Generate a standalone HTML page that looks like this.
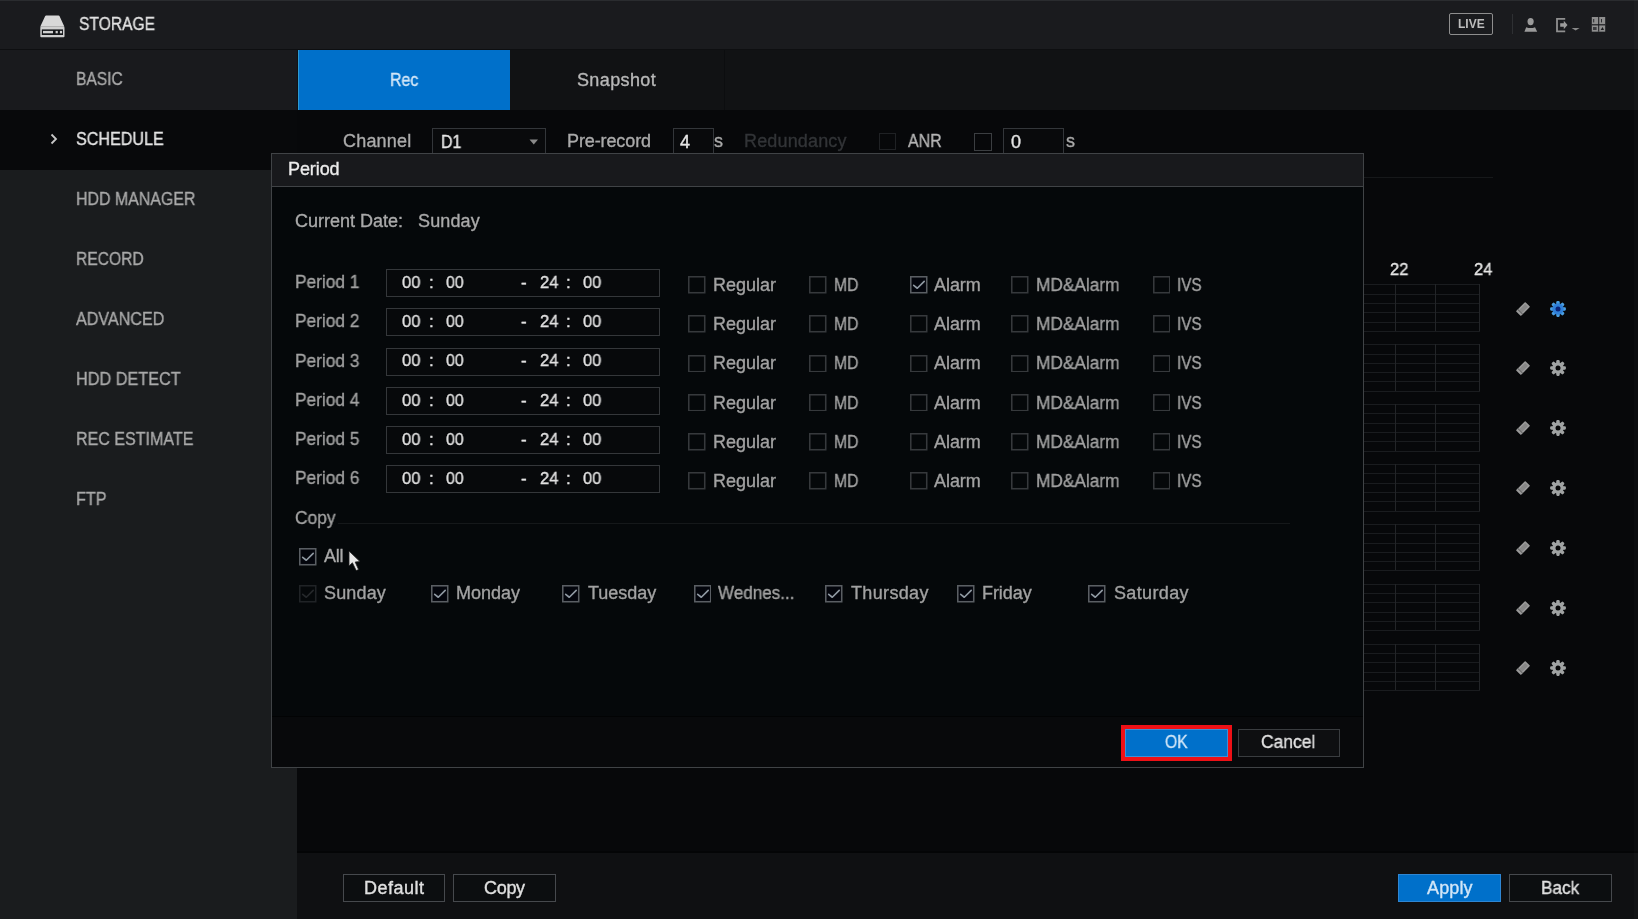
<!DOCTYPE html>
<html><head><meta charset="utf-8"><style>
html,body{margin:0;padding:0;width:1638px;height:919px;overflow:hidden;background:#0a0b0d;}
body{position:relative;font-family:"Liberation Sans",sans-serif;}
.t{position:absolute;white-space:nowrap;line-height:1;transform-origin:0 0;will-change:transform;-webkit-text-stroke:0.35px currentColor;}
.r{position:absolute;}
</style></head><body>
<div class="r" style="left:0px;top:0px;width:1638px;height:919px;background:#07080a;"></div>
<div class="r" style="left:0px;top:0px;width:1638px;height:50px;background:#1a1b1e;"></div>
<div class="r" style="left:0px;top:0px;width:1638px;height:1px;background:#2a2c2f;"></div>
<div class="r" style="left:0px;top:49px;width:1638px;height:1px;background:#0e0f11;"></div>
<div class="r" style="left:0px;top:50px;width:297px;height:60px;background:#191a1d;"></div>
<div class="r" style="left:297px;top:50px;width:1341px;height:60px;background:#111214;"></div>
<div class="r" style="left:0px;top:110px;width:297px;height:809px;background:#1a1c1e;"></div>
<div class="r" style="left:0px;top:110px;width:297px;height:60px;background:#08090b;"></div>
<div class="r" style="left:297px;top:853px;width:1341px;height:66px;background:#0f1012;"></div>
<div class="r" style="left:297px;top:851px;width:1341px;height:2px;background:#040506;"></div>
<div class="r" style="left:1634px;top:0px;width:4px;height:919px;background:rgba(255,255,255,0.02);"></div>
<div class="r" style="left:298px;top:50px;width:212px;height:60px;background:#0070ca;"></div>
<div class="r" style="left:298px;top:50px;width:1px;height:60px;background:#2d9ad0;"></div>
<div class="r" style="left:724px;top:50px;width:1px;height:60px;background:#0c0d0f;"></div>
<svg class="r" style="left:38px;top:13px" width="30" height="26" viewBox="0 0 30 26">
<path d="M8.2 2.4 L20.5 2.4 Q21.3 2.4 21.6 3.2 L26.4 13.8 L2.2 13.8 L7.1 3.2 Q7.4 2.4 8.2 2.4Z" fill="#d8d8d8"/>
<rect x="2.3" y="13.8" width="24.2" height="10.4" rx="1" fill="#cfcfcf"/>
<rect x="3.8" y="16.4" width="21.2" height="5.6" fill="#15171a"/>
<rect x="5" y="17.9" width="10" height="2.4" fill="#d0d0d0"/>
<rect x="17.6" y="17.9" width="2.2" height="2.4" fill="#d0d0d0"/>
<rect x="21.9" y="17.9" width="2.2" height="2.4" fill="#d0d0d0"/>
</svg>
<div class="t" style="left:78.80px;top:14.95px;font-size:18px;color:#e2e2e2;transform:scaleX(0.8661);">STORAGE</div>
<div class="r" style="left:1449px;top:13px;width:44px;height:22px;border:1.5px solid #8e8e8e;box-sizing:border-box;border-radius:2px;"></div>
<div class="t" style="left:1457.80px;top:17.70px;font-size:12px;color:#bdbdbd;letter-spacing:0.025px;font-weight:bold;-webkit-text-stroke:0;">LIVE</div>
<div class="r" style="left:1512px;top:14px;width:1px;height:20px;background:#2e3033;"></div>
<svg class="r" style="left:1520px;top:14px" width="22" height="22" viewBox="0 0 22 22">
<ellipse cx="10.6" cy="7.6" rx="3.1" ry="3.7" fill="#9a9a9a"/>
<path d="M4.4 17.8 L6.2 13.2 Q10.6 15 15 13.2 L17.2 17.8Z" fill="#9a9a9a"/>
</svg>
<svg class="r" style="left:1552px;top:14px" width="30" height="22" viewBox="0 0 30 22">
<path d="M13.2 4.8 L5 4.8 L5 17.4 L13.2 17.4" fill="none" stroke="#909090" stroke-width="1.8"/>
<path d="M8.2 9.2 L11.8 9.2 L11.8 6.8 L15.5 11 L11.8 15.2 L11.8 12.8 L8.2 12.8Z" fill="#9c9c9c"/>
<path d="M19.6 14 L27.6 14 L23.6 16.6Z" fill="#8a8a8a"/>
</svg>
<svg class="r" style="left:1590px;top:15px" width="18" height="20" viewBox="0 0 18 20">
<rect x="1.8" y="2" width="13.4" height="14.7" fill="#8e8e8e"/>
<rect x="1.8" y="9.2" width="13.4" height="1.2" fill="#1a1b1e"/>
<rect x="8.2" y="2" width="1" height="14.7" fill="#1a1b1e"/>
<rect x="3.2" y="4" width="1" height="3.4" fill="#2a2b2e"/>
<rect x="11" y="4" width="1" height="3.4" fill="#2a2b2e"/>
<rect x="3" y="12" width="3.6" height="3" fill="#3a3b3e"/>
<path d="M10.6 15 L12.6 12 L14 15Z" fill="#1a1b1e"/>
</svg>
<svg class="r" style="left:49px;top:132px" width="10" height="14" viewBox="0 0 10 14">
<path d="M2.5 2.5 L7 7 L2.5 11.5" fill="none" stroke="#c8c8c8" stroke-width="1.8"/></svg>
<div class="t" style="left:75.80px;top:70.35px;font-size:18px;color:#a9a9a9;transform:scaleX(0.8648);">BASIC</div>
<div class="t" style="left:75.80px;top:130.30px;font-size:18px;color:#e4e4e4;transform:scaleX(0.8949);">SCHEDULE</div>
<div class="t" style="left:75.80px;top:190.25px;font-size:18px;color:#a9a9a9;transform:scaleX(0.8844);">HDD MANAGER</div>
<div class="t" style="left:75.80px;top:250.20px;font-size:18px;color:#a9a9a9;transform:scaleX(0.8679);">RECORD</div>
<div class="t" style="left:75.80px;top:310.15px;font-size:18px;color:#a9a9a9;transform:scaleX(0.8942);">ADVANCED</div>
<div class="t" style="left:75.80px;top:370.10px;font-size:18px;color:#a9a9a9;transform:scaleX(0.9026);">HDD DETECT</div>
<div class="t" style="left:75.80px;top:430.05px;font-size:18px;color:#a9a9a9;transform:scaleX(0.8912);">REC ESTIMATE</div>
<div class="t" style="left:75.80px;top:490.00px;font-size:18px;color:#a9a9a9;transform:scaleX(0.8971);">FTP</div>
<div class="t" style="left:389.80px;top:70.85px;font-size:18px;color:#d2e6f7;transform:scaleX(0.8844);">Rec</div>
<div class="t" style="left:577.30px;top:70.85px;font-size:18px;color:#b8b8b8;letter-spacing:0.368px;">Snapshot</div>
<div class="t" style="left:342.80px;top:131.75px;font-size:18px;color:#aaaaaa;letter-spacing:0.200px;">Channel</div>
<div class="r" style="left:432px;top:128px;width:114px;height:32px;background:#090a0c;border:1px solid #33363a;box-sizing:border-box;"></div>
<div class="t" style="left:441.00px;top:132.55px;font-size:18px;color:#e6e6e6;transform:scaleX(0.8826);">D1</div>
<svg class="r" style="left:528px;top:138px" width="12" height="8"><path d="M1.5 1.5 L10 1.5 L5.75 6.5Z" fill="#8a8a8a"/></svg>
<div class="t" style="left:567.00px;top:131.75px;font-size:18px;color:#aaaaaa;letter-spacing:-0.111px;">Pre-record</div>
<div class="r" style="left:673px;top:128px;width:41px;height:32px;background:#090a0c;border:1px solid #33363a;box-sizing:border-box;"></div>
<div class="t" style="left:680.00px;top:132.55px;font-size:18px;color:#e6e6e6;">4</div>
<div class="t" style="left:713.50px;top:131.75px;font-size:18px;color:#aaaaaa;">s</div>
<div class="t" style="left:743.50px;top:131.75px;font-size:18px;color:#323437;letter-spacing:0.153px;">Redundancy</div>
<div class="r" style="left:879px;top:133px;width:17px;height:17px;border:1.5px solid #1f2124;box-sizing:border-box;"></div>
<div class="t" style="left:907.60px;top:131.75px;font-size:18px;color:#b4b4b4;transform:scaleX(0.8868);">ANR</div>
<div class="r" style="left:974px;top:133px;width:18px;height:18px;border:1.5px solid #3b3e41;box-sizing:border-box;"></div>
<div class="r" style="left:1003px;top:128px;width:61px;height:32px;background:#090a0c;border:1px solid #33363a;box-sizing:border-box;"></div>
<div class="t" style="left:1011.00px;top:132.55px;font-size:18px;color:#e6e6e6;">0</div>
<div class="t" style="left:1065.50px;top:131.75px;font-size:18px;color:#aaaaaa;">s</div>
<div class="r" style="left:1364px;top:177px;width:129px;height:1px;background:#16181a;"></div>
<div class="t" style="left:1389.90px;top:260.71px;font-size:17px;color:#e6e6e6;transform:scaleX(0.9695);">22</div>
<div class="t" style="left:1474.30px;top:260.71px;font-size:17px;color:#e6e6e6;transform:scaleX(0.9695);">24</div>
<div class="r" style="left:1363px;top:284.3px;width:117px;height:1px;background:#1a1c1f"></div><div class="r" style="left:1363px;top:293.6px;width:117px;height:1px;background:#1a1c1f"></div><div class="r" style="left:1363px;top:302.9px;width:117px;height:1px;background:#1a1c1f"></div><div class="r" style="left:1363px;top:312.2px;width:117px;height:1px;background:#1a1c1f"></div><div class="r" style="left:1363px;top:321.5px;width:117px;height:1px;background:#1a1c1f"></div><div class="r" style="left:1363px;top:330.8px;width:117px;height:1px;background:#1a1c1f"></div><div class="r" style="left:1395px;top:284.3px;width:1.3px;height:46.5px;background:#232528"></div><div class="r" style="left:1435px;top:284.3px;width:1.3px;height:46.5px;background:#232528"></div><div class="r" style="left:1479px;top:284.3px;width:1.3px;height:46.5px;background:#232528"></div>
<svg class="r" style="left:1513px;top:298.50px" width="20" height="20" viewBox="0 0 20 20">
<g transform="rotate(-45 10 10)"><rect x="3.4" y="6.5" width="13.2" height="7" rx="0.8" fill="#9a9a9a"/><rect x="6" y="8.1" width="9" height="3.8" fill="#878787"/><rect x="5.6" y="6.5" width="0.9" height="7" fill="#606060"/></g></svg>
<svg class="r" style="left:1547.6px;top:298.50px" width="20" height="20" viewBox="0 0 20 20"><rect x="8.3" y="2.1" width="3.4" height="4.5" rx="1.1" fill="#4a9ee0" transform="rotate(0 10 10)"/><rect x="8.3" y="2.1" width="3.4" height="4.5" rx="1.1" fill="#4a9ee0" transform="rotate(45 10 10)"/><rect x="8.3" y="2.1" width="3.4" height="4.5" rx="1.1" fill="#4a9ee0" transform="rotate(90 10 10)"/><rect x="8.3" y="2.1" width="3.4" height="4.5" rx="1.1" fill="#4a9ee0" transform="rotate(135 10 10)"/><rect x="8.3" y="2.1" width="3.4" height="4.5" rx="1.1" fill="#4a9ee0" transform="rotate(180 10 10)"/><rect x="8.3" y="2.1" width="3.4" height="4.5" rx="1.1" fill="#4a9ee0" transform="rotate(225 10 10)"/><rect x="8.3" y="2.1" width="3.4" height="4.5" rx="1.1" fill="#4a9ee0" transform="rotate(270 10 10)"/><rect x="8.3" y="2.1" width="3.4" height="4.5" rx="1.1" fill="#4a9ee0" transform="rotate(315 10 10)"/><circle cx="10" cy="10" r="5.7" fill="#2f7fd8"/><circle cx="10" cy="10" r="2.5" fill="#0a2478"/></svg>
<div class="r" style="left:1363px;top:344.2px;width:117px;height:1px;background:#1a1c1f"></div><div class="r" style="left:1363px;top:353.5px;width:117px;height:1px;background:#1a1c1f"></div><div class="r" style="left:1363px;top:362.8px;width:117px;height:1px;background:#1a1c1f"></div><div class="r" style="left:1363px;top:372.1px;width:117px;height:1px;background:#1a1c1f"></div><div class="r" style="left:1363px;top:381.4px;width:117px;height:1px;background:#1a1c1f"></div><div class="r" style="left:1363px;top:390.7px;width:117px;height:1px;background:#1a1c1f"></div><div class="r" style="left:1395px;top:344.2px;width:1.3px;height:46.5px;background:#232528"></div><div class="r" style="left:1435px;top:344.2px;width:1.3px;height:46.5px;background:#232528"></div><div class="r" style="left:1479px;top:344.2px;width:1.3px;height:46.5px;background:#232528"></div>
<svg class="r" style="left:1513px;top:358.40px" width="20" height="20" viewBox="0 0 20 20">
<g transform="rotate(-45 10 10)"><rect x="3.4" y="6.5" width="13.2" height="7" rx="0.8" fill="#9a9a9a"/><rect x="6" y="8.1" width="9" height="3.8" fill="#878787"/><rect x="5.6" y="6.5" width="0.9" height="7" fill="#606060"/></g></svg>
<svg class="r" style="left:1547.6px;top:358.40px" width="20" height="20" viewBox="0 0 20 20"><rect x="8.3" y="2.1" width="3.4" height="4.5" rx="1.1" fill="#a0a3a3" transform="rotate(0 10 10)"/><rect x="8.3" y="2.1" width="3.4" height="4.5" rx="1.1" fill="#a0a3a3" transform="rotate(45 10 10)"/><rect x="8.3" y="2.1" width="3.4" height="4.5" rx="1.1" fill="#a0a3a3" transform="rotate(90 10 10)"/><rect x="8.3" y="2.1" width="3.4" height="4.5" rx="1.1" fill="#a0a3a3" transform="rotate(135 10 10)"/><rect x="8.3" y="2.1" width="3.4" height="4.5" rx="1.1" fill="#a0a3a3" transform="rotate(180 10 10)"/><rect x="8.3" y="2.1" width="3.4" height="4.5" rx="1.1" fill="#a0a3a3" transform="rotate(225 10 10)"/><rect x="8.3" y="2.1" width="3.4" height="4.5" rx="1.1" fill="#a0a3a3" transform="rotate(270 10 10)"/><rect x="8.3" y="2.1" width="3.4" height="4.5" rx="1.1" fill="#a0a3a3" transform="rotate(315 10 10)"/><circle cx="10" cy="10" r="5.7" fill="#a0a3a3"/><circle cx="10" cy="10" r="2.5" fill="#050607"/></svg>
<div class="r" style="left:1363px;top:404.1px;width:117px;height:1px;background:#1a1c1f"></div><div class="r" style="left:1363px;top:413.4px;width:117px;height:1px;background:#1a1c1f"></div><div class="r" style="left:1363px;top:422.7px;width:117px;height:1px;background:#1a1c1f"></div><div class="r" style="left:1363px;top:432.0px;width:117px;height:1px;background:#1a1c1f"></div><div class="r" style="left:1363px;top:441.3px;width:117px;height:1px;background:#1a1c1f"></div><div class="r" style="left:1363px;top:450.6px;width:117px;height:1px;background:#1a1c1f"></div><div class="r" style="left:1395px;top:404.1px;width:1.3px;height:46.5px;background:#232528"></div><div class="r" style="left:1435px;top:404.1px;width:1.3px;height:46.5px;background:#232528"></div><div class="r" style="left:1479px;top:404.1px;width:1.3px;height:46.5px;background:#232528"></div>
<svg class="r" style="left:1513px;top:418.30px" width="20" height="20" viewBox="0 0 20 20">
<g transform="rotate(-45 10 10)"><rect x="3.4" y="6.5" width="13.2" height="7" rx="0.8" fill="#9a9a9a"/><rect x="6" y="8.1" width="9" height="3.8" fill="#878787"/><rect x="5.6" y="6.5" width="0.9" height="7" fill="#606060"/></g></svg>
<svg class="r" style="left:1547.6px;top:418.30px" width="20" height="20" viewBox="0 0 20 20"><rect x="8.3" y="2.1" width="3.4" height="4.5" rx="1.1" fill="#a0a3a3" transform="rotate(0 10 10)"/><rect x="8.3" y="2.1" width="3.4" height="4.5" rx="1.1" fill="#a0a3a3" transform="rotate(45 10 10)"/><rect x="8.3" y="2.1" width="3.4" height="4.5" rx="1.1" fill="#a0a3a3" transform="rotate(90 10 10)"/><rect x="8.3" y="2.1" width="3.4" height="4.5" rx="1.1" fill="#a0a3a3" transform="rotate(135 10 10)"/><rect x="8.3" y="2.1" width="3.4" height="4.5" rx="1.1" fill="#a0a3a3" transform="rotate(180 10 10)"/><rect x="8.3" y="2.1" width="3.4" height="4.5" rx="1.1" fill="#a0a3a3" transform="rotate(225 10 10)"/><rect x="8.3" y="2.1" width="3.4" height="4.5" rx="1.1" fill="#a0a3a3" transform="rotate(270 10 10)"/><rect x="8.3" y="2.1" width="3.4" height="4.5" rx="1.1" fill="#a0a3a3" transform="rotate(315 10 10)"/><circle cx="10" cy="10" r="5.7" fill="#a0a3a3"/><circle cx="10" cy="10" r="2.5" fill="#050607"/></svg>
<div class="r" style="left:1363px;top:464.0px;width:117px;height:1px;background:#1a1c1f"></div><div class="r" style="left:1363px;top:473.3px;width:117px;height:1px;background:#1a1c1f"></div><div class="r" style="left:1363px;top:482.6px;width:117px;height:1px;background:#1a1c1f"></div><div class="r" style="left:1363px;top:491.9px;width:117px;height:1px;background:#1a1c1f"></div><div class="r" style="left:1363px;top:501.2px;width:117px;height:1px;background:#1a1c1f"></div><div class="r" style="left:1363px;top:510.5px;width:117px;height:1px;background:#1a1c1f"></div><div class="r" style="left:1395px;top:464.0px;width:1.3px;height:46.5px;background:#232528"></div><div class="r" style="left:1435px;top:464.0px;width:1.3px;height:46.5px;background:#232528"></div><div class="r" style="left:1479px;top:464.0px;width:1.3px;height:46.5px;background:#232528"></div>
<svg class="r" style="left:1513px;top:478.20px" width="20" height="20" viewBox="0 0 20 20">
<g transform="rotate(-45 10 10)"><rect x="3.4" y="6.5" width="13.2" height="7" rx="0.8" fill="#9a9a9a"/><rect x="6" y="8.1" width="9" height="3.8" fill="#878787"/><rect x="5.6" y="6.5" width="0.9" height="7" fill="#606060"/></g></svg>
<svg class="r" style="left:1547.6px;top:478.20px" width="20" height="20" viewBox="0 0 20 20"><rect x="8.3" y="2.1" width="3.4" height="4.5" rx="1.1" fill="#a0a3a3" transform="rotate(0 10 10)"/><rect x="8.3" y="2.1" width="3.4" height="4.5" rx="1.1" fill="#a0a3a3" transform="rotate(45 10 10)"/><rect x="8.3" y="2.1" width="3.4" height="4.5" rx="1.1" fill="#a0a3a3" transform="rotate(90 10 10)"/><rect x="8.3" y="2.1" width="3.4" height="4.5" rx="1.1" fill="#a0a3a3" transform="rotate(135 10 10)"/><rect x="8.3" y="2.1" width="3.4" height="4.5" rx="1.1" fill="#a0a3a3" transform="rotate(180 10 10)"/><rect x="8.3" y="2.1" width="3.4" height="4.5" rx="1.1" fill="#a0a3a3" transform="rotate(225 10 10)"/><rect x="8.3" y="2.1" width="3.4" height="4.5" rx="1.1" fill="#a0a3a3" transform="rotate(270 10 10)"/><rect x="8.3" y="2.1" width="3.4" height="4.5" rx="1.1" fill="#a0a3a3" transform="rotate(315 10 10)"/><circle cx="10" cy="10" r="5.7" fill="#a0a3a3"/><circle cx="10" cy="10" r="2.5" fill="#050607"/></svg>
<div class="r" style="left:1363px;top:523.9px;width:117px;height:1px;background:#1a1c1f"></div><div class="r" style="left:1363px;top:533.2px;width:117px;height:1px;background:#1a1c1f"></div><div class="r" style="left:1363px;top:542.5px;width:117px;height:1px;background:#1a1c1f"></div><div class="r" style="left:1363px;top:551.8px;width:117px;height:1px;background:#1a1c1f"></div><div class="r" style="left:1363px;top:561.1px;width:117px;height:1px;background:#1a1c1f"></div><div class="r" style="left:1363px;top:570.4px;width:117px;height:1px;background:#1a1c1f"></div><div class="r" style="left:1395px;top:523.9px;width:1.3px;height:46.5px;background:#232528"></div><div class="r" style="left:1435px;top:523.9px;width:1.3px;height:46.5px;background:#232528"></div><div class="r" style="left:1479px;top:523.9px;width:1.3px;height:46.5px;background:#232528"></div>
<svg class="r" style="left:1513px;top:538.10px" width="20" height="20" viewBox="0 0 20 20">
<g transform="rotate(-45 10 10)"><rect x="3.4" y="6.5" width="13.2" height="7" rx="0.8" fill="#9a9a9a"/><rect x="6" y="8.1" width="9" height="3.8" fill="#878787"/><rect x="5.6" y="6.5" width="0.9" height="7" fill="#606060"/></g></svg>
<svg class="r" style="left:1547.6px;top:538.10px" width="20" height="20" viewBox="0 0 20 20"><rect x="8.3" y="2.1" width="3.4" height="4.5" rx="1.1" fill="#a0a3a3" transform="rotate(0 10 10)"/><rect x="8.3" y="2.1" width="3.4" height="4.5" rx="1.1" fill="#a0a3a3" transform="rotate(45 10 10)"/><rect x="8.3" y="2.1" width="3.4" height="4.5" rx="1.1" fill="#a0a3a3" transform="rotate(90 10 10)"/><rect x="8.3" y="2.1" width="3.4" height="4.5" rx="1.1" fill="#a0a3a3" transform="rotate(135 10 10)"/><rect x="8.3" y="2.1" width="3.4" height="4.5" rx="1.1" fill="#a0a3a3" transform="rotate(180 10 10)"/><rect x="8.3" y="2.1" width="3.4" height="4.5" rx="1.1" fill="#a0a3a3" transform="rotate(225 10 10)"/><rect x="8.3" y="2.1" width="3.4" height="4.5" rx="1.1" fill="#a0a3a3" transform="rotate(270 10 10)"/><rect x="8.3" y="2.1" width="3.4" height="4.5" rx="1.1" fill="#a0a3a3" transform="rotate(315 10 10)"/><circle cx="10" cy="10" r="5.7" fill="#a0a3a3"/><circle cx="10" cy="10" r="2.5" fill="#050607"/></svg>
<div class="r" style="left:1363px;top:583.8px;width:117px;height:1px;background:#1a1c1f"></div><div class="r" style="left:1363px;top:593.1px;width:117px;height:1px;background:#1a1c1f"></div><div class="r" style="left:1363px;top:602.4px;width:117px;height:1px;background:#1a1c1f"></div><div class="r" style="left:1363px;top:611.7px;width:117px;height:1px;background:#1a1c1f"></div><div class="r" style="left:1363px;top:621.0px;width:117px;height:1px;background:#1a1c1f"></div><div class="r" style="left:1363px;top:630.3px;width:117px;height:1px;background:#1a1c1f"></div><div class="r" style="left:1395px;top:583.8px;width:1.3px;height:46.5px;background:#232528"></div><div class="r" style="left:1435px;top:583.8px;width:1.3px;height:46.5px;background:#232528"></div><div class="r" style="left:1479px;top:583.8px;width:1.3px;height:46.5px;background:#232528"></div>
<svg class="r" style="left:1513px;top:598.00px" width="20" height="20" viewBox="0 0 20 20">
<g transform="rotate(-45 10 10)"><rect x="3.4" y="6.5" width="13.2" height="7" rx="0.8" fill="#9a9a9a"/><rect x="6" y="8.1" width="9" height="3.8" fill="#878787"/><rect x="5.6" y="6.5" width="0.9" height="7" fill="#606060"/></g></svg>
<svg class="r" style="left:1547.6px;top:598.00px" width="20" height="20" viewBox="0 0 20 20"><rect x="8.3" y="2.1" width="3.4" height="4.5" rx="1.1" fill="#a0a3a3" transform="rotate(0 10 10)"/><rect x="8.3" y="2.1" width="3.4" height="4.5" rx="1.1" fill="#a0a3a3" transform="rotate(45 10 10)"/><rect x="8.3" y="2.1" width="3.4" height="4.5" rx="1.1" fill="#a0a3a3" transform="rotate(90 10 10)"/><rect x="8.3" y="2.1" width="3.4" height="4.5" rx="1.1" fill="#a0a3a3" transform="rotate(135 10 10)"/><rect x="8.3" y="2.1" width="3.4" height="4.5" rx="1.1" fill="#a0a3a3" transform="rotate(180 10 10)"/><rect x="8.3" y="2.1" width="3.4" height="4.5" rx="1.1" fill="#a0a3a3" transform="rotate(225 10 10)"/><rect x="8.3" y="2.1" width="3.4" height="4.5" rx="1.1" fill="#a0a3a3" transform="rotate(270 10 10)"/><rect x="8.3" y="2.1" width="3.4" height="4.5" rx="1.1" fill="#a0a3a3" transform="rotate(315 10 10)"/><circle cx="10" cy="10" r="5.7" fill="#a0a3a3"/><circle cx="10" cy="10" r="2.5" fill="#050607"/></svg>
<div class="r" style="left:1363px;top:643.7px;width:117px;height:1px;background:#1a1c1f"></div><div class="r" style="left:1363px;top:653.0px;width:117px;height:1px;background:#1a1c1f"></div><div class="r" style="left:1363px;top:662.3px;width:117px;height:1px;background:#1a1c1f"></div><div class="r" style="left:1363px;top:671.6px;width:117px;height:1px;background:#1a1c1f"></div><div class="r" style="left:1363px;top:680.9px;width:117px;height:1px;background:#1a1c1f"></div><div class="r" style="left:1363px;top:690.2px;width:117px;height:1px;background:#1a1c1f"></div><div class="r" style="left:1395px;top:643.7px;width:1.3px;height:46.5px;background:#232528"></div><div class="r" style="left:1435px;top:643.7px;width:1.3px;height:46.5px;background:#232528"></div><div class="r" style="left:1479px;top:643.7px;width:1.3px;height:46.5px;background:#232528"></div>
<svg class="r" style="left:1513px;top:657.90px" width="20" height="20" viewBox="0 0 20 20">
<g transform="rotate(-45 10 10)"><rect x="3.4" y="6.5" width="13.2" height="7" rx="0.8" fill="#9a9a9a"/><rect x="6" y="8.1" width="9" height="3.8" fill="#878787"/><rect x="5.6" y="6.5" width="0.9" height="7" fill="#606060"/></g></svg>
<svg class="r" style="left:1547.6px;top:657.90px" width="20" height="20" viewBox="0 0 20 20"><rect x="8.3" y="2.1" width="3.4" height="4.5" rx="1.1" fill="#a0a3a3" transform="rotate(0 10 10)"/><rect x="8.3" y="2.1" width="3.4" height="4.5" rx="1.1" fill="#a0a3a3" transform="rotate(45 10 10)"/><rect x="8.3" y="2.1" width="3.4" height="4.5" rx="1.1" fill="#a0a3a3" transform="rotate(90 10 10)"/><rect x="8.3" y="2.1" width="3.4" height="4.5" rx="1.1" fill="#a0a3a3" transform="rotate(135 10 10)"/><rect x="8.3" y="2.1" width="3.4" height="4.5" rx="1.1" fill="#a0a3a3" transform="rotate(180 10 10)"/><rect x="8.3" y="2.1" width="3.4" height="4.5" rx="1.1" fill="#a0a3a3" transform="rotate(225 10 10)"/><rect x="8.3" y="2.1" width="3.4" height="4.5" rx="1.1" fill="#a0a3a3" transform="rotate(270 10 10)"/><rect x="8.3" y="2.1" width="3.4" height="4.5" rx="1.1" fill="#a0a3a3" transform="rotate(315 10 10)"/><circle cx="10" cy="10" r="5.7" fill="#a0a3a3"/><circle cx="10" cy="10" r="2.5" fill="#050607"/></svg>
<div class="r" style="left:271px;top:153px;width:1093px;height:615px;background:#05080a;border:1px solid #404346;box-sizing:border-box;"></div>
<div class="r" style="left:272px;top:717px;width:1091px;height:50px;background:#08090b;"></div>
<div class="r" style="left:272px;top:154px;width:1091px;height:32px;background:#18191c;"></div>
<div class="r" style="left:272px;top:186px;width:1091px;height:1px;background:#404346;"></div>
<div class="t" style="left:288.30px;top:160.35px;font-size:18px;color:#ececec;letter-spacing:-0.080px;">Period</div>
<div class="t" style="left:294.90px;top:211.65px;font-size:18px;color:#aaaaaa;">Current Date:</div>
<div class="t" style="left:418.20px;top:211.65px;font-size:18px;color:#aaaaaa;letter-spacing:0.120px;">Sunday</div>
<div class="t" style="left:295.00px;top:273.05px;font-size:18px;color:#a2a2a2;transform:scaleX(0.9612);">Period 1</div>
<div class="r" style="left:386px;top:269.0px;width:274px;height:28.0px;background:#07090b;border:1px solid #34373a;box-sizing:border-box;"></div>
<div class="t" style="left:402.00px;top:273.91px;font-size:17px;color:#e2e2e2;transform:scaleX(0.9748);">00</div>
<div class="t" style="left:429.00px;top:273.91px;font-size:17px;color:#e2e2e2;">:</div>
<div class="t" style="left:446.00px;top:273.91px;font-size:17px;color:#e2e2e2;transform:scaleX(0.9325);">00</div>
<div class="t" style="left:520.50px;top:273.91px;font-size:17px;color:#e2e2e2;">-</div>
<div class="t" style="left:540.00px;top:273.91px;font-size:17px;color:#e2e2e2;transform:scaleX(0.9748);">24</div>
<div class="t" style="left:566.00px;top:273.91px;font-size:17px;color:#e2e2e2;">:</div>
<div class="t" style="left:582.80px;top:273.91px;font-size:17px;color:#e2e2e2;transform:scaleX(0.9642);">00</div>
<svg class="r" style="left:688.2px;top:276.0px" width="17.5" height="17.5" viewBox="0 0 18 18"><rect x="0.8" y="0.8" width="16.4" height="16.4" fill="transparent" stroke="#36393c" stroke-width="1.6"/></svg>
<div class="t" style="left:712.80px;top:275.75px;font-size:18px;color:#a2a2a2;letter-spacing:-0.017px;">Regular</div>
<svg class="r" style="left:809.3px;top:276.0px" width="17.5" height="17.5" viewBox="0 0 18 18"><rect x="0.8" y="0.8" width="16.4" height="16.4" fill="transparent" stroke="#36393c" stroke-width="1.6"/></svg>
<div class="t" style="left:834.30px;top:275.75px;font-size:18px;color:#a2a2a2;transform:scaleX(0.8714);">MD</div>
<svg class="r" style="left:910.0px;top:276.0px" width="17.5" height="17.5" viewBox="0 0 18 18"><rect x="0.8" y="0.8" width="16.4" height="16.4" fill="#03050c" stroke="#5a5e63" stroke-width="1.6"/><path d="M3.8 9.6 L7.5 12.6 L14.6 5.6" fill="none" stroke="#8f99a3" stroke-width="1.7" stroke-linecap="round" stroke-linejoin="round"/></svg>
<div class="t" style="left:934.00px;top:275.75px;font-size:18px;color:#a2a2a2;letter-spacing:-0.050px;">Alarm</div>
<svg class="r" style="left:1011.0px;top:276.0px" width="17.5" height="17.5" viewBox="0 0 18 18"><rect x="0.8" y="0.8" width="16.4" height="16.4" fill="transparent" stroke="#36393c" stroke-width="1.6"/></svg>
<div class="t" style="left:1035.90px;top:275.75px;font-size:18px;color:#a2a2a2;transform:scaleX(0.9598);">MD&amp;Alarm</div>
<svg class="r" style="left:1152.7px;top:276.0px" width="17.5" height="17.5" viewBox="0 0 18 18"><rect x="0.8" y="0.8" width="16.4" height="16.4" fill="transparent" stroke="#36393c" stroke-width="1.6"/></svg>
<div class="t" style="left:1177.30px;top:275.75px;font-size:18px;color:#a2a2a2;transform:scaleX(0.8483);">IVS</div>
<div class="t" style="left:295.00px;top:312.30px;font-size:18px;color:#a2a2a2;transform:scaleX(0.9612);">Period 2</div>
<div class="r" style="left:386px;top:308.25px;width:274px;height:28.0px;background:#07090b;border:1px solid #34373a;box-sizing:border-box;"></div>
<div class="t" style="left:402.00px;top:313.16px;font-size:17px;color:#e2e2e2;transform:scaleX(0.9748);">00</div>
<div class="t" style="left:429.00px;top:313.16px;font-size:17px;color:#e2e2e2;">:</div>
<div class="t" style="left:446.00px;top:313.16px;font-size:17px;color:#e2e2e2;transform:scaleX(0.9325);">00</div>
<div class="t" style="left:520.50px;top:313.16px;font-size:17px;color:#e2e2e2;">-</div>
<div class="t" style="left:540.00px;top:313.16px;font-size:17px;color:#e2e2e2;transform:scaleX(0.9748);">24</div>
<div class="t" style="left:566.00px;top:313.16px;font-size:17px;color:#e2e2e2;">:</div>
<div class="t" style="left:582.80px;top:313.16px;font-size:17px;color:#e2e2e2;transform:scaleX(0.9642);">00</div>
<svg class="r" style="left:688.2px;top:315.2px" width="17.5" height="17.5" viewBox="0 0 18 18"><rect x="0.8" y="0.8" width="16.4" height="16.4" fill="transparent" stroke="#36393c" stroke-width="1.6"/></svg>
<div class="t" style="left:712.80px;top:315.00px;font-size:18px;color:#a2a2a2;letter-spacing:-0.017px;">Regular</div>
<svg class="r" style="left:809.3px;top:315.2px" width="17.5" height="17.5" viewBox="0 0 18 18"><rect x="0.8" y="0.8" width="16.4" height="16.4" fill="transparent" stroke="#36393c" stroke-width="1.6"/></svg>
<div class="t" style="left:834.30px;top:315.00px;font-size:18px;color:#a2a2a2;transform:scaleX(0.8714);">MD</div>
<svg class="r" style="left:910.0px;top:315.2px" width="17.5" height="17.5" viewBox="0 0 18 18"><rect x="0.8" y="0.8" width="16.4" height="16.4" fill="transparent" stroke="#36393c" stroke-width="1.6"/></svg>
<div class="t" style="left:934.00px;top:315.00px;font-size:18px;color:#a2a2a2;letter-spacing:-0.050px;">Alarm</div>
<svg class="r" style="left:1011.0px;top:315.2px" width="17.5" height="17.5" viewBox="0 0 18 18"><rect x="0.8" y="0.8" width="16.4" height="16.4" fill="transparent" stroke="#36393c" stroke-width="1.6"/></svg>
<div class="t" style="left:1035.90px;top:315.00px;font-size:18px;color:#a2a2a2;transform:scaleX(0.9598);">MD&amp;Alarm</div>
<svg class="r" style="left:1152.7px;top:315.2px" width="17.5" height="17.5" viewBox="0 0 18 18"><rect x="0.8" y="0.8" width="16.4" height="16.4" fill="transparent" stroke="#36393c" stroke-width="1.6"/></svg>
<div class="t" style="left:1177.30px;top:315.00px;font-size:18px;color:#a2a2a2;transform:scaleX(0.8483);">IVS</div>
<div class="t" style="left:295.00px;top:351.55px;font-size:18px;color:#a2a2a2;transform:scaleX(0.9612);">Period 3</div>
<div class="r" style="left:386px;top:347.5px;width:274px;height:28.0px;background:#07090b;border:1px solid #34373a;box-sizing:border-box;"></div>
<div class="t" style="left:402.00px;top:352.41px;font-size:17px;color:#e2e2e2;transform:scaleX(0.9748);">00</div>
<div class="t" style="left:429.00px;top:352.41px;font-size:17px;color:#e2e2e2;">:</div>
<div class="t" style="left:446.00px;top:352.41px;font-size:17px;color:#e2e2e2;transform:scaleX(0.9325);">00</div>
<div class="t" style="left:520.50px;top:352.41px;font-size:17px;color:#e2e2e2;">-</div>
<div class="t" style="left:540.00px;top:352.41px;font-size:17px;color:#e2e2e2;transform:scaleX(0.9748);">24</div>
<div class="t" style="left:566.00px;top:352.41px;font-size:17px;color:#e2e2e2;">:</div>
<div class="t" style="left:582.80px;top:352.41px;font-size:17px;color:#e2e2e2;transform:scaleX(0.9642);">00</div>
<svg class="r" style="left:688.2px;top:354.5px" width="17.5" height="17.5" viewBox="0 0 18 18"><rect x="0.8" y="0.8" width="16.4" height="16.4" fill="transparent" stroke="#36393c" stroke-width="1.6"/></svg>
<div class="t" style="left:712.80px;top:354.25px;font-size:18px;color:#a2a2a2;letter-spacing:-0.017px;">Regular</div>
<svg class="r" style="left:809.3px;top:354.5px" width="17.5" height="17.5" viewBox="0 0 18 18"><rect x="0.8" y="0.8" width="16.4" height="16.4" fill="transparent" stroke="#36393c" stroke-width="1.6"/></svg>
<div class="t" style="left:834.30px;top:354.25px;font-size:18px;color:#a2a2a2;transform:scaleX(0.8714);">MD</div>
<svg class="r" style="left:910.0px;top:354.5px" width="17.5" height="17.5" viewBox="0 0 18 18"><rect x="0.8" y="0.8" width="16.4" height="16.4" fill="transparent" stroke="#36393c" stroke-width="1.6"/></svg>
<div class="t" style="left:934.00px;top:354.25px;font-size:18px;color:#a2a2a2;letter-spacing:-0.050px;">Alarm</div>
<svg class="r" style="left:1011.0px;top:354.5px" width="17.5" height="17.5" viewBox="0 0 18 18"><rect x="0.8" y="0.8" width="16.4" height="16.4" fill="transparent" stroke="#36393c" stroke-width="1.6"/></svg>
<div class="t" style="left:1035.90px;top:354.25px;font-size:18px;color:#a2a2a2;transform:scaleX(0.9598);">MD&amp;Alarm</div>
<svg class="r" style="left:1152.7px;top:354.5px" width="17.5" height="17.5" viewBox="0 0 18 18"><rect x="0.8" y="0.8" width="16.4" height="16.4" fill="transparent" stroke="#36393c" stroke-width="1.6"/></svg>
<div class="t" style="left:1177.30px;top:354.25px;font-size:18px;color:#a2a2a2;transform:scaleX(0.8483);">IVS</div>
<div class="t" style="left:295.00px;top:390.80px;font-size:18px;color:#a2a2a2;transform:scaleX(0.9612);">Period 4</div>
<div class="r" style="left:386px;top:386.75px;width:274px;height:28.0px;background:#07090b;border:1px solid #34373a;box-sizing:border-box;"></div>
<div class="t" style="left:402.00px;top:391.66px;font-size:17px;color:#e2e2e2;transform:scaleX(0.9748);">00</div>
<div class="t" style="left:429.00px;top:391.66px;font-size:17px;color:#e2e2e2;">:</div>
<div class="t" style="left:446.00px;top:391.66px;font-size:17px;color:#e2e2e2;transform:scaleX(0.9325);">00</div>
<div class="t" style="left:520.50px;top:391.66px;font-size:17px;color:#e2e2e2;">-</div>
<div class="t" style="left:540.00px;top:391.66px;font-size:17px;color:#e2e2e2;transform:scaleX(0.9748);">24</div>
<div class="t" style="left:566.00px;top:391.66px;font-size:17px;color:#e2e2e2;">:</div>
<div class="t" style="left:582.80px;top:391.66px;font-size:17px;color:#e2e2e2;transform:scaleX(0.9642);">00</div>
<svg class="r" style="left:688.2px;top:393.8px" width="17.5" height="17.5" viewBox="0 0 18 18"><rect x="0.8" y="0.8" width="16.4" height="16.4" fill="transparent" stroke="#36393c" stroke-width="1.6"/></svg>
<div class="t" style="left:712.80px;top:393.50px;font-size:18px;color:#a2a2a2;letter-spacing:-0.017px;">Regular</div>
<svg class="r" style="left:809.3px;top:393.8px" width="17.5" height="17.5" viewBox="0 0 18 18"><rect x="0.8" y="0.8" width="16.4" height="16.4" fill="transparent" stroke="#36393c" stroke-width="1.6"/></svg>
<div class="t" style="left:834.30px;top:393.50px;font-size:18px;color:#a2a2a2;transform:scaleX(0.8714);">MD</div>
<svg class="r" style="left:910.0px;top:393.8px" width="17.5" height="17.5" viewBox="0 0 18 18"><rect x="0.8" y="0.8" width="16.4" height="16.4" fill="transparent" stroke="#36393c" stroke-width="1.6"/></svg>
<div class="t" style="left:934.00px;top:393.50px;font-size:18px;color:#a2a2a2;letter-spacing:-0.050px;">Alarm</div>
<svg class="r" style="left:1011.0px;top:393.8px" width="17.5" height="17.5" viewBox="0 0 18 18"><rect x="0.8" y="0.8" width="16.4" height="16.4" fill="transparent" stroke="#36393c" stroke-width="1.6"/></svg>
<div class="t" style="left:1035.90px;top:393.50px;font-size:18px;color:#a2a2a2;transform:scaleX(0.9598);">MD&amp;Alarm</div>
<svg class="r" style="left:1152.7px;top:393.8px" width="17.5" height="17.5" viewBox="0 0 18 18"><rect x="0.8" y="0.8" width="16.4" height="16.4" fill="transparent" stroke="#36393c" stroke-width="1.6"/></svg>
<div class="t" style="left:1177.30px;top:393.50px;font-size:18px;color:#a2a2a2;transform:scaleX(0.8483);">IVS</div>
<div class="t" style="left:295.00px;top:430.05px;font-size:18px;color:#a2a2a2;transform:scaleX(0.9612);">Period 5</div>
<div class="r" style="left:386px;top:426.0px;width:274px;height:28.0px;background:#07090b;border:1px solid #34373a;box-sizing:border-box;"></div>
<div class="t" style="left:402.00px;top:430.91px;font-size:17px;color:#e2e2e2;transform:scaleX(0.9748);">00</div>
<div class="t" style="left:429.00px;top:430.91px;font-size:17px;color:#e2e2e2;">:</div>
<div class="t" style="left:446.00px;top:430.91px;font-size:17px;color:#e2e2e2;transform:scaleX(0.9325);">00</div>
<div class="t" style="left:520.50px;top:430.91px;font-size:17px;color:#e2e2e2;">-</div>
<div class="t" style="left:540.00px;top:430.91px;font-size:17px;color:#e2e2e2;transform:scaleX(0.9748);">24</div>
<div class="t" style="left:566.00px;top:430.91px;font-size:17px;color:#e2e2e2;">:</div>
<div class="t" style="left:582.80px;top:430.91px;font-size:17px;color:#e2e2e2;transform:scaleX(0.9642);">00</div>
<svg class="r" style="left:688.2px;top:433.0px" width="17.5" height="17.5" viewBox="0 0 18 18"><rect x="0.8" y="0.8" width="16.4" height="16.4" fill="transparent" stroke="#36393c" stroke-width="1.6"/></svg>
<div class="t" style="left:712.80px;top:432.75px;font-size:18px;color:#a2a2a2;letter-spacing:-0.017px;">Regular</div>
<svg class="r" style="left:809.3px;top:433.0px" width="17.5" height="17.5" viewBox="0 0 18 18"><rect x="0.8" y="0.8" width="16.4" height="16.4" fill="transparent" stroke="#36393c" stroke-width="1.6"/></svg>
<div class="t" style="left:834.30px;top:432.75px;font-size:18px;color:#a2a2a2;transform:scaleX(0.8714);">MD</div>
<svg class="r" style="left:910.0px;top:433.0px" width="17.5" height="17.5" viewBox="0 0 18 18"><rect x="0.8" y="0.8" width="16.4" height="16.4" fill="transparent" stroke="#36393c" stroke-width="1.6"/></svg>
<div class="t" style="left:934.00px;top:432.75px;font-size:18px;color:#a2a2a2;letter-spacing:-0.050px;">Alarm</div>
<svg class="r" style="left:1011.0px;top:433.0px" width="17.5" height="17.5" viewBox="0 0 18 18"><rect x="0.8" y="0.8" width="16.4" height="16.4" fill="transparent" stroke="#36393c" stroke-width="1.6"/></svg>
<div class="t" style="left:1035.90px;top:432.75px;font-size:18px;color:#a2a2a2;transform:scaleX(0.9598);">MD&amp;Alarm</div>
<svg class="r" style="left:1152.7px;top:433.0px" width="17.5" height="17.5" viewBox="0 0 18 18"><rect x="0.8" y="0.8" width="16.4" height="16.4" fill="transparent" stroke="#36393c" stroke-width="1.6"/></svg>
<div class="t" style="left:1177.30px;top:432.75px;font-size:18px;color:#a2a2a2;transform:scaleX(0.8483);">IVS</div>
<div class="t" style="left:295.00px;top:469.30px;font-size:18px;color:#a2a2a2;transform:scaleX(0.9612);">Period 6</div>
<div class="r" style="left:386px;top:465.25px;width:274px;height:28.0px;background:#07090b;border:1px solid #34373a;box-sizing:border-box;"></div>
<div class="t" style="left:402.00px;top:470.16px;font-size:17px;color:#e2e2e2;transform:scaleX(0.9748);">00</div>
<div class="t" style="left:429.00px;top:470.16px;font-size:17px;color:#e2e2e2;">:</div>
<div class="t" style="left:446.00px;top:470.16px;font-size:17px;color:#e2e2e2;transform:scaleX(0.9325);">00</div>
<div class="t" style="left:520.50px;top:470.16px;font-size:17px;color:#e2e2e2;">-</div>
<div class="t" style="left:540.00px;top:470.16px;font-size:17px;color:#e2e2e2;transform:scaleX(0.9748);">24</div>
<div class="t" style="left:566.00px;top:470.16px;font-size:17px;color:#e2e2e2;">:</div>
<div class="t" style="left:582.80px;top:470.16px;font-size:17px;color:#e2e2e2;transform:scaleX(0.9642);">00</div>
<svg class="r" style="left:688.2px;top:472.2px" width="17.5" height="17.5" viewBox="0 0 18 18"><rect x="0.8" y="0.8" width="16.4" height="16.4" fill="transparent" stroke="#36393c" stroke-width="1.6"/></svg>
<div class="t" style="left:712.80px;top:472.00px;font-size:18px;color:#a2a2a2;letter-spacing:-0.017px;">Regular</div>
<svg class="r" style="left:809.3px;top:472.2px" width="17.5" height="17.5" viewBox="0 0 18 18"><rect x="0.8" y="0.8" width="16.4" height="16.4" fill="transparent" stroke="#36393c" stroke-width="1.6"/></svg>
<div class="t" style="left:834.30px;top:472.00px;font-size:18px;color:#a2a2a2;transform:scaleX(0.8714);">MD</div>
<svg class="r" style="left:910.0px;top:472.2px" width="17.5" height="17.5" viewBox="0 0 18 18"><rect x="0.8" y="0.8" width="16.4" height="16.4" fill="transparent" stroke="#36393c" stroke-width="1.6"/></svg>
<div class="t" style="left:934.00px;top:472.00px;font-size:18px;color:#a2a2a2;letter-spacing:-0.050px;">Alarm</div>
<svg class="r" style="left:1011.0px;top:472.2px" width="17.5" height="17.5" viewBox="0 0 18 18"><rect x="0.8" y="0.8" width="16.4" height="16.4" fill="transparent" stroke="#36393c" stroke-width="1.6"/></svg>
<div class="t" style="left:1035.90px;top:472.00px;font-size:18px;color:#a2a2a2;transform:scaleX(0.9598);">MD&amp;Alarm</div>
<svg class="r" style="left:1152.7px;top:472.2px" width="17.5" height="17.5" viewBox="0 0 18 18"><rect x="0.8" y="0.8" width="16.4" height="16.4" fill="transparent" stroke="#36393c" stroke-width="1.6"/></svg>
<div class="t" style="left:1177.30px;top:472.00px;font-size:18px;color:#a2a2a2;transform:scaleX(0.8483);">IVS</div>
<div class="t" style="left:294.80px;top:509.15px;font-size:18px;color:#a2a2a2;transform:scaleX(0.9643);">Copy</div>
<div class="r" style="left:338px;top:523px;width:952px;height:1px;background:#15181a;"></div>
<svg class="r" style="left:299.2px;top:548.0px" width="17.5" height="17.5" viewBox="0 0 18 18"><rect x="0.8" y="0.8" width="16.4" height="16.4" fill="#03050c" stroke="#5a5e63" stroke-width="1.6"/><path d="M3.8 9.6 L7.5 12.6 L14.6 5.6" fill="none" stroke="#8f99a3" stroke-width="1.7" stroke-linecap="round" stroke-linejoin="round"/></svg>
<div class="t" style="left:323.70px;top:546.65px;font-size:18px;color:#aaaaaa;letter-spacing:-0.300px;">All</div>
<svg class="r" style="left:299.0px;top:585.3px" width="17.5" height="17.5" viewBox="0 0 18 18"><rect x="0.8" y="0.8" width="16.4" height="16.4" fill="transparent" stroke="#202326" stroke-width="1.6"/><path d="M3.8 9.6 L7.5 12.6 L14.6 5.6" fill="none" stroke="#25282b" stroke-width="1.7" stroke-linecap="round" stroke-linejoin="round"/></svg>
<div class="t" style="left:324.30px;top:583.65px;font-size:18px;color:#a2a2a2;letter-spacing:0.160px;">Sunday</div>
<svg class="r" style="left:431.0px;top:585.3px" width="17.5" height="17.5" viewBox="0 0 18 18"><rect x="0.8" y="0.8" width="16.4" height="16.4" fill="#03050c" stroke="#5a5e63" stroke-width="1.6"/><path d="M3.8 9.6 L7.5 12.6 L14.6 5.6" fill="none" stroke="#8f99a3" stroke-width="1.7" stroke-linecap="round" stroke-linejoin="round"/></svg>
<div class="t" style="left:456.00px;top:583.65px;font-size:18px;color:#a2a2a2;">Monday</div>
<svg class="r" style="left:562.0px;top:585.3px" width="17.5" height="17.5" viewBox="0 0 18 18"><rect x="0.8" y="0.8" width="16.4" height="16.4" fill="#03050c" stroke="#5a5e63" stroke-width="1.6"/><path d="M3.8 9.6 L7.5 12.6 L14.6 5.6" fill="none" stroke="#8f99a3" stroke-width="1.7" stroke-linecap="round" stroke-linejoin="round"/></svg>
<div class="t" style="left:588.00px;top:583.65px;font-size:18px;color:#a2a2a2;">Tuesday</div>
<svg class="r" style="left:693.5px;top:585.3px" width="17.5" height="17.5" viewBox="0 0 18 18"><rect x="0.8" y="0.8" width="16.4" height="16.4" fill="#03050c" stroke="#5a5e63" stroke-width="1.6"/><path d="M3.8 9.6 L7.5 12.6 L14.6 5.6" fill="none" stroke="#8f99a3" stroke-width="1.7" stroke-linecap="round" stroke-linejoin="round"/></svg>
<div class="t" style="left:718.40px;top:583.65px;font-size:18px;color:#a2a2a2;transform:scaleX(0.9461);">Wednes...</div>
<svg class="r" style="left:825.1px;top:585.3px" width="17.5" height="17.5" viewBox="0 0 18 18"><rect x="0.8" y="0.8" width="16.4" height="16.4" fill="#03050c" stroke="#5a5e63" stroke-width="1.6"/><path d="M3.8 9.6 L7.5 12.6 L14.6 5.6" fill="none" stroke="#8f99a3" stroke-width="1.7" stroke-linecap="round" stroke-linejoin="round"/></svg>
<div class="t" style="left:851.00px;top:583.65px;font-size:18px;color:#a2a2a2;letter-spacing:0.343px;">Thursday</div>
<svg class="r" style="left:957.0px;top:585.3px" width="17.5" height="17.5" viewBox="0 0 18 18"><rect x="0.8" y="0.8" width="16.4" height="16.4" fill="#03050c" stroke="#5a5e63" stroke-width="1.6"/><path d="M3.8 9.6 L7.5 12.6 L14.6 5.6" fill="none" stroke="#8f99a3" stroke-width="1.7" stroke-linecap="round" stroke-linejoin="round"/></svg>
<div class="t" style="left:982.00px;top:583.65px;font-size:18px;color:#a2a2a2;letter-spacing:-0.060px;">Friday</div>
<svg class="r" style="left:1088.4px;top:585.3px" width="17.5" height="17.5" viewBox="0 0 18 18"><rect x="0.8" y="0.8" width="16.4" height="16.4" fill="#03050c" stroke="#5a5e63" stroke-width="1.6"/><path d="M3.8 9.6 L7.5 12.6 L14.6 5.6" fill="none" stroke="#8f99a3" stroke-width="1.7" stroke-linecap="round" stroke-linejoin="round"/></svg>
<div class="t" style="left:1113.50px;top:583.65px;font-size:18px;color:#a2a2a2;letter-spacing:0.357px;">Saturday</div>
<svg class="r" style="left:347px;top:549px" width="16" height="24" viewBox="0 0 16 24">
<path d="M2 2 L2 17 L5.4 13.8 L9.2 21.6 L11.6 20.6 L8.2 13 L13 12.6Z" fill="#e8e8e8" stroke="#202020" stroke-width="0.8"/></svg>
<div class="r" style="left:272px;top:716px;width:1091px;height:1px;background:#020304;"></div>
<div class="r" style="left:1121px;top:725px;width:111px;height:36px;background:#ee1016;"></div>
<div class="r" style="left:1125px;top:729px;width:103px;height:28px;background:#0070ca;border:1px solid #3d8fd6;box-sizing:border-box;"></div>
<div class="t" style="left:1164.60px;top:732.85px;font-size:18px;color:#d2e6f7;transform:scaleX(0.8692);">OK</div>
<div class="r" style="left:1237.5px;top:729px;width:102.5px;height:28px;background:#0e0f11;border:1px solid #3a3d40;box-sizing:border-box;"></div>
<div class="t" style="left:1260.70px;top:732.85px;font-size:18px;color:#e2e2e2;transform:scaleX(0.9696);">Cancel</div>
<div class="r" style="left:342.5px;top:874px;width:102.5px;height:28px;background:#0c0e10;border:1px solid #46494d;box-sizing:border-box;"></div>
<div class="t" style="left:363.60px;top:878.95px;font-size:18px;color:#e0e0e0;letter-spacing:0.500px;">Default</div>
<div class="r" style="left:453px;top:874px;width:103px;height:28px;background:#0c0e10;border:1px solid #46494d;box-sizing:border-box;"></div>
<div class="t" style="left:484.10px;top:878.95px;font-size:18px;color:#e0e0e0;letter-spacing:-0.300px;">Copy</div>
<div class="r" style="left:1398px;top:874px;width:103px;height:28px;background:#0070ca;border:1px solid #2f86d2;box-sizing:border-box;"></div>
<div class="t" style="left:1426.50px;top:878.95px;font-size:18px;color:#d2e6f7;letter-spacing:0.125px;">Apply</div>
<div class="r" style="left:1509px;top:874px;width:103px;height:28px;background:#0c0e10;border:1px solid #46494d;box-sizing:border-box;"></div>
<div class="t" style="left:1541.40px;top:878.95px;font-size:18px;color:#e0e0e0;transform:scaleX(0.9545);">Back</div>
</body></html>
